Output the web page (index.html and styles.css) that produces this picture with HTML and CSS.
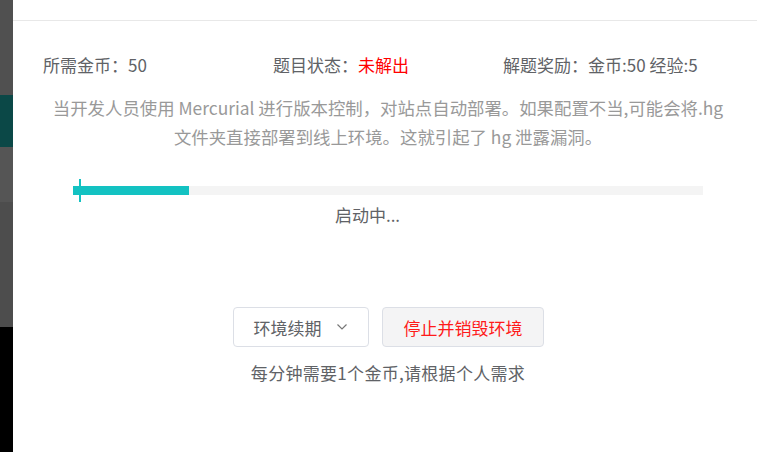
FILE: index.html
```html
<!DOCTYPE html>
<html lang="zh-CN">
<head>
<meta charset="UTF-8">
<meta name="viewport" content="width=device-width, initial-scale=1.0">
<title>环境</title>
<link rel="stylesheet" href="styles.css">
</head>
<body>
<div class="page">
  <div class="backdrop">
    <div class="bd bd-top"></div>
    <div class="bd bd-teal"></div>
    <div class="bd bd-mid"></div>
    <div class="bd bd-low"></div>
    <div class="bd bd-black"></div>
  </div>
  <div class="dialog">
    <div class="dialog-header"></div>
    <div class="dialog-body">
      <div class="info-row">
        <div class="info-col">所需金币：50</div>
        <div class="info-col">题目状态：<span class="unsolved">未解出</span></div>
        <div class="info-col">解题奖励：金币:50 经验:5</div>
      </div>
      <p class="desc">当开发人员使用 Mercurial 进行版本控制，对站点自动部署。如果配置不当,可能会将.hg<br>文件夹直接部署到线上环境。这就引起了 hg 泄露漏洞。</p>
      <div class="progress">
        <div class="progress-track">
          <div class="progress-fill" style="width: 18.4%"></div>
        </div>
        <span class="progress-tick"></span>
      </div>
      <div class="status">启动中...</div>
      <div class="actions">
        <button class="btn btn-renew">环境续期
          <svg class="chev" width="10" height="6" viewBox="0 0 10 6"><path d="M0.5 0.5 L5 5 L9.5 0.5" fill="none" stroke="#777" stroke-width="1.2"/></svg>
        </button>
        <button class="btn btn-danger">停止并销毁环境</button>
      </div>
      <div class="note">每分钟需要1个金币,请根据个人需求</div>
    </div>
  </div>
</div>
</body>
</html>
```

FILE: styles.css
```css
body {
  margin: 0;
  font-family: "Noto Sans CJK SC", "Noto Sans", sans-serif;
  background-color: #fff;
}
.page {
  display: flex;
  height: 452px;
  overflow: hidden;
}
.backdrop {
  width: 13px;
  flex-shrink: 0;
  display: flex;
  flex-direction: column;
}
.bd-top {
  height: 95px;
  background-color: #505050;
}
.bd-teal {
  height: 52px;
  background-color: #0b4847;
}
.bd-mid {
  height: 55px;
  background-color: #555555;
}
.bd-low {
  height: 125px;
  background-color: #4d4d4d;
}
.bd-black {
  flex: 1;
  background-color: #000;
}
.dialog {
  flex: 1;
  min-width: 0;
  background-color: #fff;
}
.dialog-header {
  height: 20px;
  border-bottom: 1px solid #e8e8e8;
}
.dialog-body {
  width: 690px;
  padding: 0 30px;
  color: #606266;
  font-size: 17px;
}
.info-row {
  display: flex;
  padding-top: 32px;
  line-height: 24px;
}
.info-col {
  width: 230px;
  flex-shrink: 0;
}
.unsolved {
  color: #ff0000;
}
.desc {
  margin: 16px -20px 0;
  text-align: center;
  line-height: 29px;
  color: #999;
  font-size: 17.4px;
}
.progress {
  position: relative;
  margin: 35px 30px 0;
}
.progress-track {
  height: 9px;
  background-color: #f4f4f4;
}
.progress-fill {
  height: 100%;
  background-color: #13c2c2;
}
.progress-tick {
  position: absolute;
  left: 6px;
  top: -7px;
  width: 2px;
  height: 23px;
  background-color: #13c2c2;
}
.status {
  margin-top: 7px;
  padding-right: 41px;
  text-align: center;
  line-height: 26px;
}
.actions {
  display: flex;
  justify-content: center;
  gap: 13px;
  margin-top: 79px;
}
.btn {
  height: 40px;
  padding: 0 19px;
  font-family: inherit;
  font-size: 17px;
  color: #606266;
  background-color: #fff;
  border: 1px solid #dcdfe6;
  border-radius: 4px;
  display: flex;
  align-items: center;
}
.btn-renew {
  padding: 0 21px 0 20px;
}
.chev {
  margin-left: 15px;
}
.btn-danger {
  color: #ff1a1a;
  background-color: #f4f4f5;
  padding: 0 20px 0 21px;
}
.note {
  margin-top: 13px;
  text-align: center;
  line-height: 26px;
  letter-spacing: 0.3px;
}
```
